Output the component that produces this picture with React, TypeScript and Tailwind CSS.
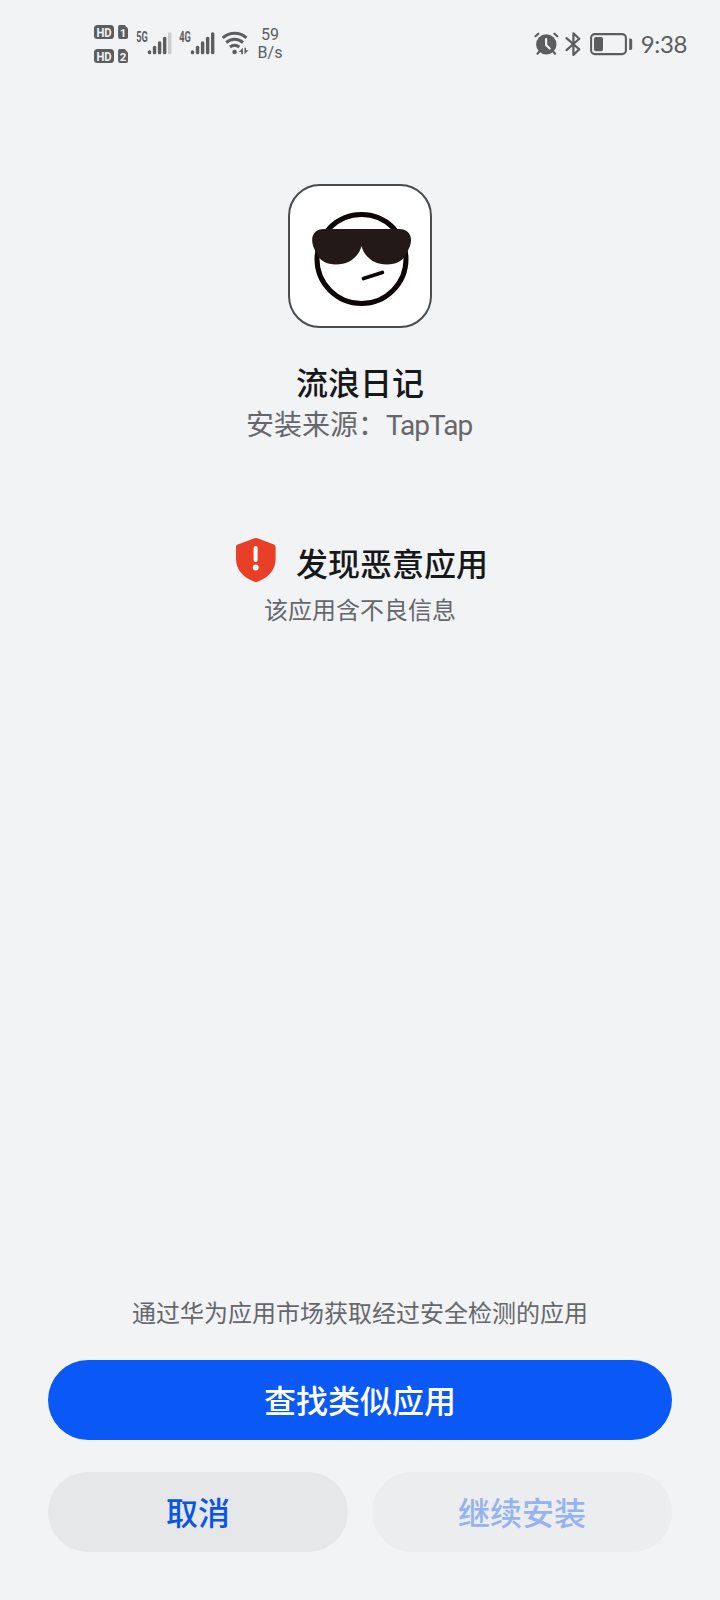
interface SignalProps {
  label: string;
  level: number;
}

const SIGNAL_BARS = [4, 8.5, 13, 17.5, 22];

function SimBadge({ slot }: { slot: string }) {
  return (
    <svg width="36" height="14" viewBox="0 0 36 14" className="block">
      <rect width="20" height="14" rx="3.5" fill="#5c5d5f" />
      <text
        x="2.4"
        y="11.5"
        textLength="15.2"
        lengthAdjust="spacingAndGlyphs"
        fontFamily="Roboto"
        fontWeight="700"
        fontSize="12.5"
        fill="#f1f3f5"
      >
        HD
      </text>
      <path
        d="M25.600 0h5l3.400 3.600V12a2 2 0 0 1-2 2h-5.900a2 2 0 0 1-2-2V1.500a1.500 1.500 0 0 1 1.500-1.500z"
        fill="#5c5d5f"
      />
      <text
        x="29"
        y="11.6"
        textAnchor="middle"
        fontFamily="Roboto"
        fontWeight="700"
        fontSize="11.5"
        fill="#f1f3f5"
      >
        {slot}
      </text>
    </svg>
  );
}

function Signal({ label, level }: SignalProps) {
  return (
    <svg width="38" height="30" viewBox="-1 -6 38 30" className="block">
      <text
        x="0.2"
        y="11"
        textLength="11.6"
        lengthAdjust="spacingAndGlyphs"
        fontFamily="Roboto"
        fontWeight="700"
        fontSize="14"
        fill="#5c5d5f"
      >
        {label}
      </text>
      {SIGNAL_BARS.map((height, index) => (
        <rect
          key={height}
          x={11.8 + index * 5.05}
          y={23.2 - height}
          width="3.4"
          height={height}
          rx="1.5"
          fill={index < level ? "#5c5d5f" : "#cbcccd"}
        />
      ))}
    </svg>
  );
}

function WifiIcon() {
  return (
    <svg width="28" height="24" viewBox="0 0 28 24" fill="none" className="block">
      <g stroke="#5c5d5f" strokeWidth="2.9">
        <path d="M.7 6.900C7.600.6 17.600.6 24.500 6.900" />
        <path d="M4.200 11.600c5-4.400 11.800-4.400 16.800 0" />
        <path d="M7.900 16c2.900-2.300 6.500-2.300 9.400 0" />
      </g>
      <circle cx="12.600" cy="21" r="2.300" fill="#5c5d5f" />
      <path
        d="M20.900 16.800v6.400h-1.600v-2.200h-2.400zM22.500 16.800h1.500v2.400h2.500l-4 4z"
        fill="#5c5d5f"
      />
    </svg>
  );
}

function AlarmIcon() {
  return (
    <svg width="26" height="25" viewBox="0 0 26 25" fill="none" className="block">
      <circle cx="12.300" cy="12.400" r="10.200" fill="#5c5d5f" />
      <g stroke="#5c5d5f" strokeWidth="2.200" strokeLinecap="round">
        <path d="M1.500 4.200 4.300 1.700M20.400 1.700l2.800 2.500M5.400 19.500l-1.900 2.200M19.200 19.500l1.900 2.200" />
      </g>
      <path
        d="M12.100 7v6l3.600 3.500"
        stroke="#f1f3f5"
        strokeWidth="2.200"
        strokeLinecap="round"
        strokeLinejoin="round"
      />
    </svg>
  );
}

function BluetoothIcon() {
  return (
    <svg width="17" height="25" viewBox="0 0 17 25" fill="none" className="block">
      <path
        d="M1.500 6.200 14.300 17.300 8.400 22.900V1.400l5.900 5.300L1.500 18.100"
        stroke="#5c5d5f"
        strokeWidth="2.200"
        strokeLinecap="round"
        strokeLinejoin="round"
      />
    </svg>
  );
}

function BatteryIcon() {
  return (
    <svg width="43" height="23" viewBox="0 0 43 23" fill="none" className="block">
      <rect x="1.100" y="1.100" width="34.800" height="20" rx="3.800" stroke="#5c5d5f" strokeWidth="2.100" />
      <rect x="4" y="4" width="9" height="14.200" rx="1.800" fill="#5c5d5f" />
      <path d="M39.200 5.400h1.200a1.800 1.800 0 0 1 1.800 1.800v8a1.800 1.800 0 0 1-1.800 1.800h-1.200z" fill="#5c5d5f" />
    </svg>
  );
}

function StatusBar() {
  return (
    <header className="flex h-[88px] items-start justify-between pr-[33px] pl-[94px] text-[#5c5d5f]">
      <div className="flex items-start">
        <div className="mt-[25px] flex flex-col gap-[10px]">
          <SimBadge slot="1" />
          <SimBadge slot="2" />
        </div>
        <div className="mt-[25px] ml-[5px] flex gap-[5px]">
          <Signal label="5G" level={4} />
          <Signal label="4G" level={5} />
          <div className="mt-1.5 ml-px">
            <WifiIcon />
          </div>
        </div>
        <div className="mt-[26px] ml-[5px] w-[30px] text-center font-[Roboto] text-[16px] leading-[18px]">
          <p>59</p>
          <p className="whitespace-nowrap">B/s</p>
        </div>
      </div>
      <div className="mt-[32px] flex items-start">
        <AlarmIcon />
        <div className="ml-[5px]">
          <BluetoothIcon />
        </div>
        <div className="mt-px ml-[8px]">
          <BatteryIcon />
        </div>
        <p className="ml-[8px] font-[Lato] text-2xl leading-[24px] tracking-[-0.4px]">9:38</p>
      </div>
    </header>
  );
}

function AppLogo() {
  return (
    <svg width="144" height="144" viewBox="0 0 144 144" fill="none" className="block">
      <rect x="1" y="1" width="142" height="142" rx="31" fill="#fff" stroke="#4a4b4e" strokeWidth="2" />
      <circle cx="73.500" cy="75" r="44.500" stroke="#0c0506" strokeWidth="5" />
      <path
        d="M36 45h75c8 0 12.500 5 12 12-.3 4.500-2 7-3.500 10.500C116.500 76 109.500 80.500 99 80.500c-13 0-22.700-7.500-25.500-18.500C70.700 73 61 80.500 48 80.500c-10.500 0-17.500-4.500-20.500-13C26 64 24.500 61.500 24.200 57 23.700 50 28 45 36 45z"
        fill="#231918"
      />
      <path d="m75.500 94.500 18.800-6" stroke="#0c0506" strokeWidth="3.800" strokeLinecap="round" />
    </svg>
  );
}

function ShieldIcon() {
  return (
    <svg width="48" height="48" viewBox="0 0 48 48" fill="none" className="block">
      <path
        d="M22.600 2.300a4 4 0 0 1 2.800 0l16.500 6.100a2.500 2.500 0 0 1 1.700 2.400V23c0 10.500-6.800 18.700-18.200 22.700a4 4 0 0 1-2.800 0C11.200 41.700 4 33.500 4 23V10.800c0-1.100.7-2 1.700-2.400z"
        fill="#e93f27"
      />
      <path d="M23.600 12v12" stroke="#fff" strokeWidth="4" strokeLinecap="round" />
      <circle cx="23.700" cy="31.500" r="2.900" fill="#fff" />
    </svg>
  );
}

export default function App() {
  return (
    <div className="flex h-[1600px] w-[720px] flex-col bg-[#f1f3f5] font-['Noto_Sans_CJK_SC',sans-serif]">
      <StatusBar />

      <main className="flex flex-1 flex-col items-center pt-24">
        <AppLogo />
        <h1 className="mt-[29px] text-[32px] leading-[48px] font-medium text-[#17181a]">
          流浪日记
        </h1>
        <p className="mt-0.5 pr-0.5 text-[28px] leading-8 whitespace-nowrap text-[#66676a]">
          安装来源：<span className="font-[Roboto] tracking-[-1px]">TapTap</span>
        </p>

        <section className="mt-[94px] flex flex-col items-center">
          <div className="flex gap-4">
            <ShieldIcon />
            <h2 className="mt-0.5 text-[32px] leading-[48px] font-medium text-[#17181a]">
              发现恶意应用
            </h2>
          </div>
          <p className="mt-[5px] text-2xl leading-9 text-[#66676a]">该应用含不良信息</p>
        </section>
      </main>

      <footer className="px-12 pb-12">
        <p className="mb-[30px] text-center text-2xl leading-9 text-[#66676a]">
          通过华为应用市场获取经过安全检测的应用
        </p>
        <button
          type="button"
          className="block h-20 w-full rounded-full bg-[#0a59f7] pb-0.5 text-[32px] font-medium text-white"
        >
          查找类似应用
        </button>
        <div className="mt-8 grid grid-cols-2 gap-6">
          <button
            type="button"
            className="h-20 rounded-full bg-[#e5e7e9] pb-0.5 text-[32px] font-medium text-[#0a55e8]"
          >
            取消
          </button>
          <button
            type="button"
            disabled
            className="h-20 rounded-full bg-[#ebedef] pb-0.5 text-[32px] font-medium text-[#95b2f1]"
          >
            继续安装
          </button>
        </div>
      </footer>
    </div>
  );
}
